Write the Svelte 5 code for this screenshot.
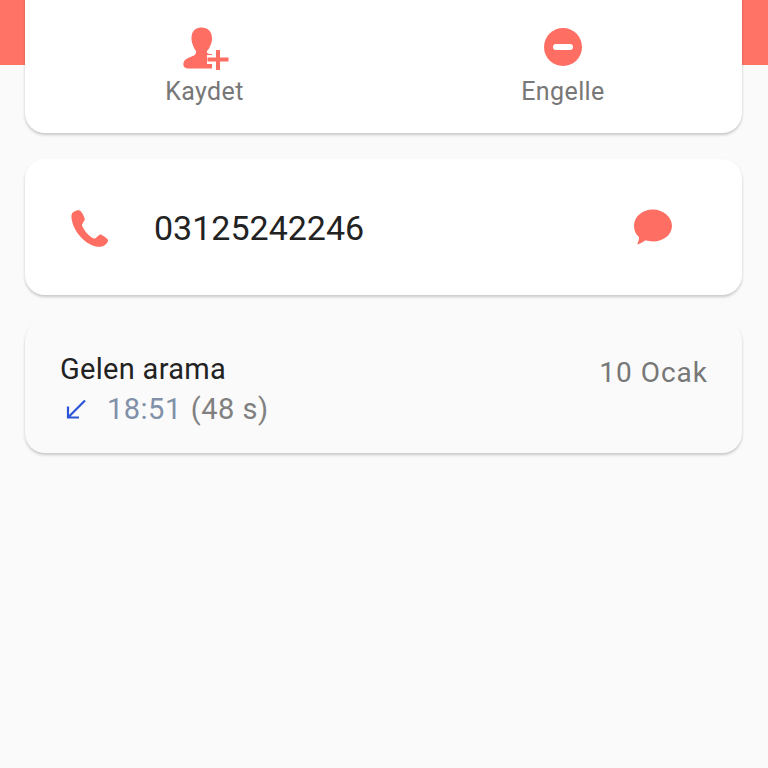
<script>
  const actions = [
    { label: "Kaydet", icon: "add" },
    { label: "Engelle", icon: "block" }
  ];
</script>

<div class="page">
  <div class="band"></div>

  <div class="card actions">
    {#each actions as a}
      <div class="action">
        <div class="icon">
          {#if a.icon == "add"}
            <svg width="46" height="43" viewBox="0 0 46 43">
              <path class="fill" d="M18.500 .5C12.500 .5 8.500 4.500 8.500 11c0 3 .5 5 1.200 6.500 1 3 2 5 3.300 6.500.3 2-.5 3.500-2 4.500C8 30 3 31 1 34.500c-1.500 3-.5 7 4 7h24V27c-4 .5-5.500-1-5-3 1.500-1.500 3-4 3.800-6.500 1-2 1.200-4 1.200-6.500 0-6.500-4.500-10.500-10.500-10.500z"/>
              <path class="halo" d="M24 32.500h22M35 22v20"/>
              <path class="stroke" d="M24.500 32.500h21M35 23v20"/>
            </svg>
          {:else}
            <svg class="round" width="38" height="38" viewBox="0 0 38 38">
              <circle class="fill" cx="19" cy="19" r="19"/>
              <rect x="9" y="16" width="20" height="6" rx="3" fill="#fff"/>
            </svg>
          {/if}
        </div>
        <span>{a.label}</span>
      </div>
    {/each}
  </div>

  <div class="card number">
    <svg class="phone" width="38" height="38" viewBox="0 0 38 38">
      <path class="fill" d="M5.500 1.500C3.500 2.200 1 3.500 .5 6c-.4 3 .6 8 3 13 3 6 8 12 15 16 4 2.300 9 3.500 12.500 2.500 2.500-.7 5-3 5.800-5 .4-1 .2-2-.6-2.800-1.600-1.400-3.500-2.700-5.400-3.700-1.200-.6-2.300-.5-3.200.4l-2.800 2.600c-.8.600-1.700.7-2.600.2-2.800-1.500-5.500-3.800-7.400-6.200-1.600-2-2.900-4.200-3.700-6.200-.3-1 0-1.800.7-2.500L13 12c.8-.8.9-1.800.5-2.800-.7-2.200-2-4.700-3.500-6.700-1-1.200-2.800-1.600-4.500-1z"/>
    </svg>
    <span class="digits">03125242246</span>
    <svg class="bubble" width="40" height="37" viewBox="0 0 40 37">
      <path class="fill" d="M20 .5C9.500 .5 1 7.500 1 17c0 4.500 1.800 8.300 5 11.200.4 1.500-.6 4.300-1.800 7.300 3-.8 6-2.400 8.300-4.200 2.300.7 5 1.200 7.500 1.200 10.500 0 19-7 19-15.500S30.500 .5 20 .5z"/>
    </svg>
  </div>

  <div class="card log">
    <div class="info">
      <div class="title">Gelen arama</div>
      <div class="meta">
        <svg width="22" height="22" viewBox="0 0 22 22">
          <path d="M20 2.500 3 19.500M3 8.500v11h11" fill="none" stroke="#2a55d8" stroke-width="2.200"/>
        </svg>
        <span class="time">18:51</span>
        <span class="dur">(48 s)</span>
      </div>
    </div>
    <span class="date">10 Ocak</span>
  </div>
</div>

<style>
  :global(body) {
    margin: 0;
    background: #fafafa;
  }
  .page {
    height: 768px;
    overflow: hidden;
    background: #fafafa;
    font-family: Roboto, "Liberation Sans", sans-serif;
  }
  .band {
    height: 65px;
    background: #ff7366;
  }
  .card {
    margin: 0 26px 26px 25px;
    border-radius: 20px;
    background: #fff;
    box-shadow: 0 2px 3px rgba(0, 0, 0, 0.2);
  }
  .fill {
    fill: #ff6e62;
  }
  .stroke {
    fill: none;
    stroke: #ff6e62;
    stroke-width: 4;
  }
  .halo {
    fill: none;
    stroke: #fff;
    stroke-width: 9;
  }
  .actions {
    margin-top: -85px;
    height: 133px;
    padding-top: 20px;
    display: grid;
    grid-template-columns: 359px 1fr;
  }
  .action {
    display: flex;
    flex-direction: column;
    align-items: center;
    padding-top: 27px;
    color: #777;
    font-size: 25px;
    line-height: 30px;
    letter-spacing: 0.4px;
  }
  .icon {
    height: 42px;
    margin-bottom: 8px;
  }
  .icon svg {
    display: block;
    overflow: visible;
    margin-left: 2px;
  }
  .icon .round {
    margin: 1px 0 0;
  }
  .number {
    height: 136px;
    display: flex;
    align-items: center;
    padding: 0 69px 0 46px;
  }
  .phone {
    margin-top: 1px;
  }
  .digits {
    flex: 1;
    margin-left: 45px;
    padding-top: 1px;
    color: #222;
    font-size: 34px;
  }
  .log {
    height: 132px;
    background: #fafafa;
    display: flex;
    justify-content: space-between;
    padding: 0 34px 0 35px;
    box-sizing: border-box;
  }
  .title {
    margin-top: 31px;
    font-size: 29px;
    line-height: 34px;
    letter-spacing: 0.3px;
    color: #222;
  }
  .meta {
    display: flex;
    align-items: center;
    margin-top: 5px;
    font-size: 29px;
    line-height: 36px;
    letter-spacing: 0.5px;
  }
  .meta svg {
    margin-right: 20px;
    margin-left: 5px;
  }
  .time {
    color: #8090a8;
    margin-right: 9px;
  }
  .dur {
    color: #808080;
  }
  .date {
    margin-top: 35px;
    font-size: 28px;
    line-height: 34px;
    letter-spacing: 1px;
    color: #777;
  }
</style>
